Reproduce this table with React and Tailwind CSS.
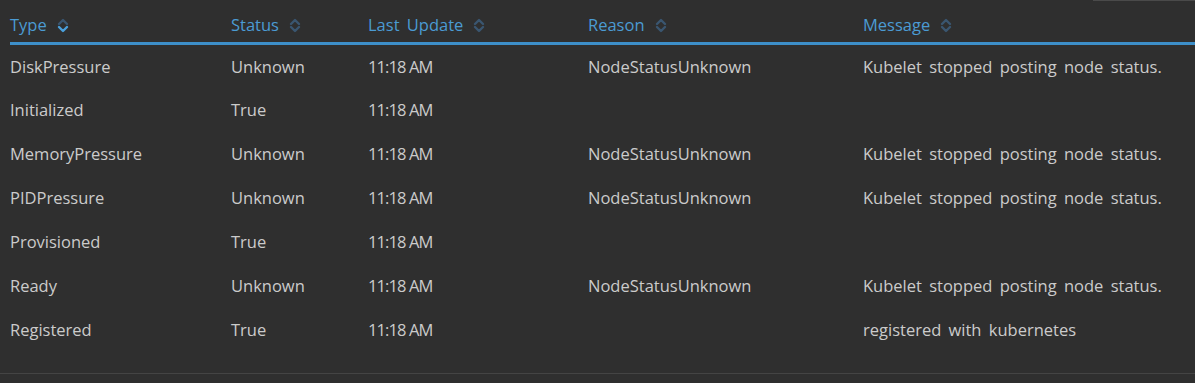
import React from "react";

const rows = [
  ["DiskPressure", "Unknown", "11:18 AM", "NodeStatusUnknown", "Kubelet stopped posting node status."],
  ["Initialized", "True", "11:18 AM", "", ""],
  ["MemoryPressure", "Unknown", "11:18 AM", "NodeStatusUnknown", "Kubelet stopped posting node status."],
  ["PIDPressure", "Unknown", "11:18 AM", "NodeStatusUnknown", "Kubelet stopped posting node status."],
  ["Provisioned", "True", "11:18 AM", "", ""],
  ["Ready", "Unknown", "11:18 AM", "NodeStatusUnknown", "Kubelet stopped posting node status."],
  ["Registered", "True", "11:18 AM", "", "registered with kubernetes"],
];

function SortIcon({ active }) {
  return (
    <svg width="12" height="17" viewBox="0 0 12 17" className="ml-[10px] inline-block">
      <path d="M2 7 L6 3 L10 7" fill="none" stroke="#3a5670" strokeWidth="2.4" strokeLinecap="round" strokeLinejoin="round" />
      <path d="M2 10 L6 14 L10 10" fill="none" stroke={active ? "#4aa0dc" : "#3a5670"} strokeWidth="2.4" strokeLinecap="round" strokeLinejoin="round" />
    </svg>
  );
}

const cols = [
  { label: "Type", w: "w-[221px]", active: true },
  { label: "Status", w: "w-[137px]" },
  { label: "Last Update", w: "w-[220px]", cell: "tracking-[-0.9px] [word-spacing:0px]" },
  { label: "Reason", w: "w-[275px]" },
  { label: "Message", w: "" },
];

export default function App() {
  return (
    <div className="relative h-[383px] w-[1195px] overflow-hidden bg-[#2f2f2f] text-[16.5px] text-[#cbcbcb] [word-spacing:3px]" style={{ fontFamily: "'Open Sans', 'Noto Sans', sans-serif" }}>
      <div className="absolute right-0 top-0 h-px w-[102px] bg-[#4a4a4a]" />
      <div className="pl-[10px] pt-[3px]">
        <div className="flex h-[42px] items-center border-b-[3px] border-[#3d8fc9] pt-[5px] text-[#4b9bd3]">
          {cols.map((c) => (
            <div key={c.label} className={`${c.w} flex shrink-0 items-center`}>
              <span>{c.label}</span>
              <SortIcon active={c.active} />
            </div>
          ))}
        </div>
        {rows.map((r, i) => (
          <div key={i} className={`flex items-center ${i === 0 ? "h-[43px] pt-[1px]" : "h-[44px]"}`}>
            {r.map((cell, j) => (
              <div key={j} className={`${cols[j].w} ${cols[j].cell || ""} shrink-0 whitespace-nowrap`}>
                {cell}
              </div>
            ))}
          </div>
        ))}
      </div>
      <div className="absolute bottom-[9px] left-0 h-px w-full bg-[#444444]" />
    </div>
  );
}
